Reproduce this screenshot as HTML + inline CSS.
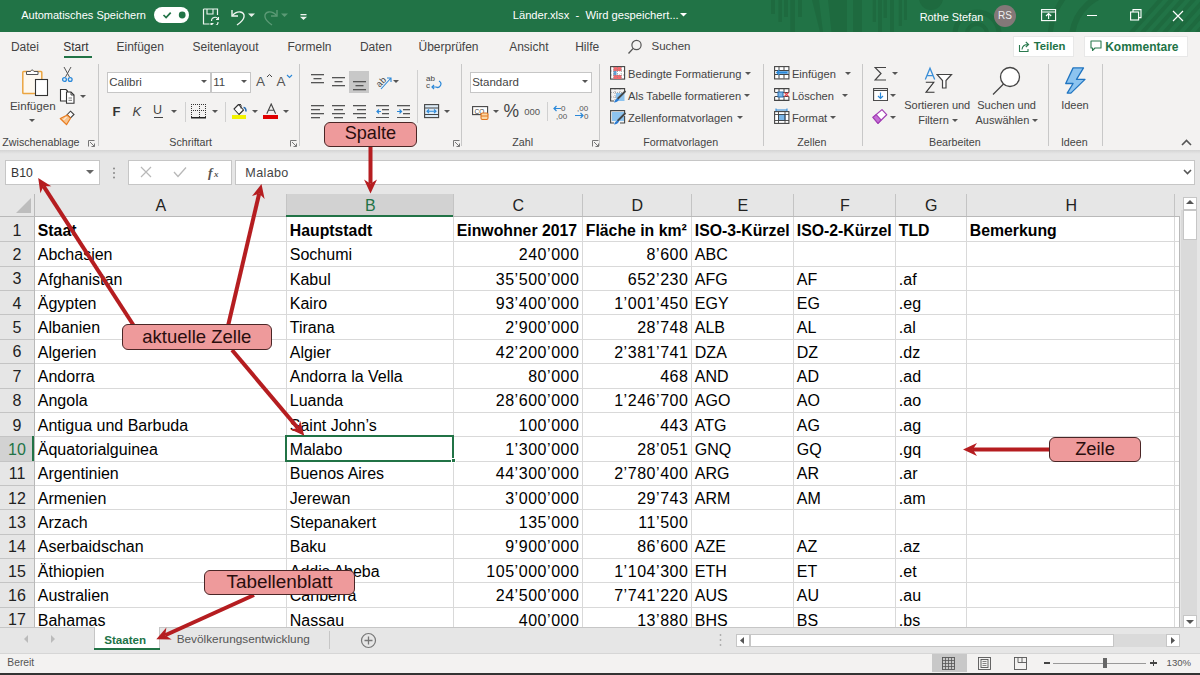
<!DOCTYPE html><html><head><meta charset='utf-8'><style>
*{margin:0;padding:0;box-sizing:border-box}
html,body{width:1200px;height:675px;overflow:hidden;background:#f3f2f1;font-family:"Liberation Sans", sans-serif;}
.a{position:absolute;white-space:nowrap}
.t{position:absolute;white-space:nowrap;line-height:1}
</style></head><body>
<div class='a' style='left:0;top:0;width:1200px;height:32px;background:#217346'></div>
<div class='a' style='left:0;top:150px;width:1200px;height:44px;background:#e6e6e6'></div>
<div class='a' style='left:0;top:194px;width:1180px;height:23px;background:#e6e6e6'></div>
<div class='a' style='left:34px;top:217px;width:1146px;height:410px;background:#fff'></div>
<div class='a' style='left:0;top:217px;width:34px;height:410px;background:#e6e6e6'></div>
<div class='a' style='left:286px;top:194px;width:167px;height:23px;background:#d2d2d2'></div>
<div class='a' style='left:0;top:436px;width:34px;height:25px;background:#d2d2d2'></div>
<div class='a' style='left:286px;top:217px;width:1px;height:410px;background:#d9d9d9'></div>
<div class='a' style='left:286px;top:194px;width:1px;height:23px;background:#c4c4c4'></div>
<div class='a' style='left:453px;top:217px;width:1px;height:410px;background:#d9d9d9'></div>
<div class='a' style='left:453px;top:194px;width:1px;height:23px;background:#c4c4c4'></div>
<div class='a' style='left:582px;top:217px;width:1px;height:410px;background:#d9d9d9'></div>
<div class='a' style='left:582px;top:194px;width:1px;height:23px;background:#c4c4c4'></div>
<div class='a' style='left:691px;top:217px;width:1px;height:410px;background:#d9d9d9'></div>
<div class='a' style='left:691px;top:194px;width:1px;height:23px;background:#c4c4c4'></div>
<div class='a' style='left:793px;top:217px;width:1px;height:410px;background:#d9d9d9'></div>
<div class='a' style='left:793px;top:194px;width:1px;height:23px;background:#c4c4c4'></div>
<div class='a' style='left:895px;top:217px;width:1px;height:410px;background:#d9d9d9'></div>
<div class='a' style='left:895px;top:194px;width:1px;height:23px;background:#c4c4c4'></div>
<div class='a' style='left:966px;top:217px;width:1px;height:410px;background:#d9d9d9'></div>
<div class='a' style='left:966px;top:194px;width:1px;height:23px;background:#c4c4c4'></div>
<div class='a' style='left:1174px;top:217px;width:1px;height:410px;background:#d9d9d9'></div>
<div class='a' style='left:1174px;top:194px;width:1px;height:23px;background:#c4c4c4'></div>
<div class='a' style='left:34px;top:241px;width:1146px;height:1px;background:#d9d9d9'></div>
<div class='a' style='left:0;top:241px;width:34px;height:1px;background:#c4c4c4'></div>
<div class='a' style='left:34px;top:266px;width:1146px;height:1px;background:#d9d9d9'></div>
<div class='a' style='left:0;top:266px;width:34px;height:1px;background:#c4c4c4'></div>
<div class='a' style='left:34px;top:290px;width:1146px;height:1px;background:#d9d9d9'></div>
<div class='a' style='left:0;top:290px;width:34px;height:1px;background:#c4c4c4'></div>
<div class='a' style='left:34px;top:314px;width:1146px;height:1px;background:#d9d9d9'></div>
<div class='a' style='left:0;top:314px;width:34px;height:1px;background:#c4c4c4'></div>
<div class='a' style='left:34px;top:339px;width:1146px;height:1px;background:#d9d9d9'></div>
<div class='a' style='left:0;top:339px;width:34px;height:1px;background:#c4c4c4'></div>
<div class='a' style='left:34px;top:363px;width:1146px;height:1px;background:#d9d9d9'></div>
<div class='a' style='left:0;top:363px;width:34px;height:1px;background:#c4c4c4'></div>
<div class='a' style='left:34px;top:388px;width:1146px;height:1px;background:#d9d9d9'></div>
<div class='a' style='left:0;top:388px;width:34px;height:1px;background:#c4c4c4'></div>
<div class='a' style='left:34px;top:412px;width:1146px;height:1px;background:#d9d9d9'></div>
<div class='a' style='left:0;top:412px;width:34px;height:1px;background:#c4c4c4'></div>
<div class='a' style='left:34px;top:436px;width:1146px;height:1px;background:#d9d9d9'></div>
<div class='a' style='left:0;top:436px;width:34px;height:1px;background:#c4c4c4'></div>
<div class='a' style='left:34px;top:461px;width:1146px;height:1px;background:#d9d9d9'></div>
<div class='a' style='left:0;top:461px;width:34px;height:1px;background:#c4c4c4'></div>
<div class='a' style='left:34px;top:485px;width:1146px;height:1px;background:#d9d9d9'></div>
<div class='a' style='left:0;top:485px;width:34px;height:1px;background:#c4c4c4'></div>
<div class='a' style='left:34px;top:509px;width:1146px;height:1px;background:#d9d9d9'></div>
<div class='a' style='left:0;top:509px;width:34px;height:1px;background:#c4c4c4'></div>
<div class='a' style='left:34px;top:534px;width:1146px;height:1px;background:#d9d9d9'></div>
<div class='a' style='left:0;top:534px;width:34px;height:1px;background:#c4c4c4'></div>
<div class='a' style='left:34px;top:558px;width:1146px;height:1px;background:#d9d9d9'></div>
<div class='a' style='left:0;top:558px;width:34px;height:1px;background:#c4c4c4'></div>
<div class='a' style='left:34px;top:582px;width:1146px;height:1px;background:#d9d9d9'></div>
<div class='a' style='left:0;top:582px;width:34px;height:1px;background:#c4c4c4'></div>
<div class='a' style='left:34px;top:607px;width:1146px;height:1px;background:#d9d9d9'></div>
<div class='a' style='left:0;top:607px;width:34px;height:1px;background:#c4c4c4'></div>
<div class='a' style='left:0;top:216px;width:1180px;height:1px;background:#b9b9b9'></div>
<div class='a' style='left:34px;top:194px;width:1px;height:433px;background:#b9b9b9'></div>
<div class='a' style='left:286px;top:215px;width:167px;height:2px;background:#217346'></div>
<div class='a' style='left:32px;top:436px;width:2px;height:25px;background:#217346'></div>
<svg class='a' style='left:0;top:194px' width='34' height='23'><polygon points='31,4 31,19 16,19' fill='#bdbdbd'/></svg>
<div class='t' style='left:34.8px;width:252px;top:198.3px;text-align:center;font-size:16px;color:#222'>A</div>
<div class='t' style='left:286.8px;width:167px;top:198.3px;text-align:center;font-size:16px;color:#217346'>B</div>
<div class='t' style='left:453.8px;width:129px;top:198.3px;text-align:center;font-size:16px;color:#222'>C</div>
<div class='t' style='left:582.8px;width:109px;top:198.3px;text-align:center;font-size:16px;color:#222'>D</div>
<div class='t' style='left:691.8px;width:102px;top:198.3px;text-align:center;font-size:16px;color:#222'>E</div>
<div class='t' style='left:793.8px;width:102px;top:198.3px;text-align:center;font-size:16px;color:#222'>F</div>
<div class='t' style='left:895.8px;width:71px;top:198.3px;text-align:center;font-size:16px;color:#222'>G</div>
<div class='t' style='left:966.8px;width:209px;top:198.3px;text-align:center;font-size:16px;color:#222'>H</div>
<div class='t' style='left:0;width:34px;top:222.6px;text-align:center;font-size:16px;color:#222'>1</div>
<div class='t' style='left:37.8px;top:223px;font-size:15.8px;font-weight:700;color:#000'>Staat</div>
<div class='t' style='left:289.8px;top:223px;font-size:15.8px;font-weight:700;color:#000'>Hauptstadt</div>
<div class='t' style='left:456.8px;top:223px;font-size:15.8px;font-weight:700;color:#000'>Einwohner 2017</div>
<div class='t' style='left:585.8px;top:223px;font-size:15.8px;font-weight:700;color:#000'>Fläche in km²</div>
<div class='t' style='left:694.8px;top:223px;font-size:15.8px;font-weight:700;color:#000'>ISO-3-Kürzel</div>
<div class='t' style='left:796.8px;top:223px;font-size:15.8px;font-weight:700;color:#000'>ISO-2-Kürzel</div>
<div class='t' style='left:898.8px;top:223px;font-size:15.8px;font-weight:700;color:#000'>TLD</div>
<div class='t' style='left:969.8px;top:223px;font-size:15.8px;font-weight:700;color:#000'>Bemerkung</div>
<div class='t' style='left:0;width:34px;top:247.0px;text-align:center;font-size:16px;color:#222'>2</div>
<div class='t' style='left:37.8px;top:247px;font-size:16px;font-weight:400;color:#000'>Abchasien</div>
<div class='t' style='left:289.8px;top:247px;font-size:16px;font-weight:400;color:#000'>Sochumi</div>
<div class='t' style='left:453px;width:126.5px;top:247px;text-align:right;font-size:16px;font-weight:400;color:#000;letter-spacing:0.55px'>240’000</div>
<div class='t' style='left:582px;width:106.5px;top:247px;text-align:right;font-size:16px;font-weight:400;color:#000;letter-spacing:0.55px'>8’600</div>
<div class='t' style='left:694.8px;top:247px;font-size:16px;font-weight:400;color:#000'>ABC</div>
<div class='t' style='left:0;width:34px;top:271.3px;text-align:center;font-size:16px;color:#222'>3</div>
<div class='t' style='left:37.8px;top:272px;font-size:16px;font-weight:400;color:#000'>Afghanistan</div>
<div class='t' style='left:289.8px;top:272px;font-size:16px;font-weight:400;color:#000'>Kabul</div>
<div class='t' style='left:453px;width:126.5px;top:272px;text-align:right;font-size:16px;font-weight:400;color:#000;letter-spacing:0.55px'>35’500’000</div>
<div class='t' style='left:582px;width:106.5px;top:272px;text-align:right;font-size:16px;font-weight:400;color:#000;letter-spacing:0.55px'>652’230</div>
<div class='t' style='left:694.8px;top:272px;font-size:16px;font-weight:400;color:#000'>AFG</div>
<div class='t' style='left:796.8px;top:272px;font-size:16px;font-weight:400;color:#000'>AF</div>
<div class='t' style='left:898.8px;top:272px;font-size:16px;font-weight:400;color:#000'>.af</div>
<div class='t' style='left:0;width:34px;top:295.7px;text-align:center;font-size:16px;color:#222'>4</div>
<div class='t' style='left:37.8px;top:296px;font-size:16px;font-weight:400;color:#000'>Ägypten</div>
<div class='t' style='left:289.8px;top:296px;font-size:16px;font-weight:400;color:#000'>Kairo</div>
<div class='t' style='left:453px;width:126.5px;top:296px;text-align:right;font-size:16px;font-weight:400;color:#000;letter-spacing:0.55px'>93’400’000</div>
<div class='t' style='left:582px;width:106.5px;top:296px;text-align:right;font-size:16px;font-weight:400;color:#000;letter-spacing:0.55px'>1’001’450</div>
<div class='t' style='left:694.8px;top:296px;font-size:16px;font-weight:400;color:#000'>EGY</div>
<div class='t' style='left:796.8px;top:296px;font-size:16px;font-weight:400;color:#000'>EG</div>
<div class='t' style='left:898.8px;top:296px;font-size:16px;font-weight:400;color:#000'>.eg</div>
<div class='t' style='left:0;width:34px;top:320.0px;text-align:center;font-size:16px;color:#222'>5</div>
<div class='t' style='left:37.8px;top:320px;font-size:16px;font-weight:400;color:#000'>Albanien</div>
<div class='t' style='left:289.8px;top:320px;font-size:16px;font-weight:400;color:#000'>Tirana</div>
<div class='t' style='left:453px;width:126.5px;top:320px;text-align:right;font-size:16px;font-weight:400;color:#000;letter-spacing:0.55px'>2’900’000</div>
<div class='t' style='left:582px;width:106.5px;top:320px;text-align:right;font-size:16px;font-weight:400;color:#000;letter-spacing:0.55px'>28’748</div>
<div class='t' style='left:694.8px;top:320px;font-size:16px;font-weight:400;color:#000'>ALB</div>
<div class='t' style='left:796.8px;top:320px;font-size:16px;font-weight:400;color:#000'>AL</div>
<div class='t' style='left:898.8px;top:320px;font-size:16px;font-weight:400;color:#000'>.al</div>
<div class='t' style='left:0;width:34px;top:344.4px;text-align:center;font-size:16px;color:#222'>6</div>
<div class='t' style='left:37.8px;top:345px;font-size:16px;font-weight:400;color:#000'>Algerien</div>
<div class='t' style='left:289.8px;top:345px;font-size:16px;font-weight:400;color:#000'>Algier</div>
<div class='t' style='left:453px;width:126.5px;top:345px;text-align:right;font-size:16px;font-weight:400;color:#000;letter-spacing:0.55px'>42’200’000</div>
<div class='t' style='left:582px;width:106.5px;top:345px;text-align:right;font-size:16px;font-weight:400;color:#000;letter-spacing:0.55px'>2’381’741</div>
<div class='t' style='left:694.8px;top:345px;font-size:16px;font-weight:400;color:#000'>DZA</div>
<div class='t' style='left:796.8px;top:345px;font-size:16px;font-weight:400;color:#000'>DZ</div>
<div class='t' style='left:898.8px;top:345px;font-size:16px;font-weight:400;color:#000'>.dz</div>
<div class='t' style='left:0;width:34px;top:368.8px;text-align:center;font-size:16px;color:#222'>7</div>
<div class='t' style='left:37.8px;top:369px;font-size:16px;font-weight:400;color:#000'>Andorra</div>
<div class='t' style='left:289.8px;top:369px;font-size:16px;font-weight:400;color:#000'>Andorra la Vella</div>
<div class='t' style='left:453px;width:126.5px;top:369px;text-align:right;font-size:16px;font-weight:400;color:#000;letter-spacing:0.55px'>80’000</div>
<div class='t' style='left:582px;width:106.5px;top:369px;text-align:right;font-size:16px;font-weight:400;color:#000;letter-spacing:0.55px'>468</div>
<div class='t' style='left:694.8px;top:369px;font-size:16px;font-weight:400;color:#000'>AND</div>
<div class='t' style='left:796.8px;top:369px;font-size:16px;font-weight:400;color:#000'>AD</div>
<div class='t' style='left:898.8px;top:369px;font-size:16px;font-weight:400;color:#000'>.ad</div>
<div class='t' style='left:0;width:34px;top:393.1px;text-align:center;font-size:16px;color:#222'>8</div>
<div class='t' style='left:37.8px;top:393px;font-size:16px;font-weight:400;color:#000'>Angola</div>
<div class='t' style='left:289.8px;top:393px;font-size:16px;font-weight:400;color:#000'>Luanda</div>
<div class='t' style='left:453px;width:126.5px;top:393px;text-align:right;font-size:16px;font-weight:400;color:#000;letter-spacing:0.55px'>28’600’000</div>
<div class='t' style='left:582px;width:106.5px;top:393px;text-align:right;font-size:16px;font-weight:400;color:#000;letter-spacing:0.55px'>1’246’700</div>
<div class='t' style='left:694.8px;top:393px;font-size:16px;font-weight:400;color:#000'>AGO</div>
<div class='t' style='left:796.8px;top:393px;font-size:16px;font-weight:400;color:#000'>AO</div>
<div class='t' style='left:898.8px;top:393px;font-size:16px;font-weight:400;color:#000'>.ao</div>
<div class='t' style='left:0;width:34px;top:417.5px;text-align:center;font-size:16px;color:#222'>9</div>
<div class='t' style='left:37.8px;top:418px;font-size:16px;font-weight:400;color:#000'>Antigua und Barbuda</div>
<div class='t' style='left:289.8px;top:418px;font-size:16px;font-weight:400;color:#000'>Saint John’s</div>
<div class='t' style='left:453px;width:126.5px;top:418px;text-align:right;font-size:16px;font-weight:400;color:#000;letter-spacing:0.55px'>100’000</div>
<div class='t' style='left:582px;width:106.5px;top:418px;text-align:right;font-size:16px;font-weight:400;color:#000;letter-spacing:0.55px'>443</div>
<div class='t' style='left:694.8px;top:418px;font-size:16px;font-weight:400;color:#000'>ATG</div>
<div class='t' style='left:796.8px;top:418px;font-size:16px;font-weight:400;color:#000'>AG</div>
<div class='t' style='left:898.8px;top:418px;font-size:16px;font-weight:400;color:#000'>.ag</div>
<div class='t' style='left:0;width:34px;top:441.8px;text-align:center;font-size:16px;color:#217346'>10</div>
<div class='t' style='left:37.8px;top:442px;font-size:16px;font-weight:400;color:#000'>Äquatorialguinea</div>
<div class='t' style='left:289.8px;top:442px;font-size:16px;font-weight:400;color:#000'>Malabo</div>
<div class='t' style='left:453px;width:126.5px;top:442px;text-align:right;font-size:16px;font-weight:400;color:#000;letter-spacing:0.55px'>1’300’000</div>
<div class='t' style='left:582px;width:106.5px;top:442px;text-align:right;font-size:16px;font-weight:400;color:#000;letter-spacing:0.55px'>28’051</div>
<div class='t' style='left:694.8px;top:442px;font-size:16px;font-weight:400;color:#000'>GNQ</div>
<div class='t' style='left:796.8px;top:442px;font-size:16px;font-weight:400;color:#000'>GQ</div>
<div class='t' style='left:898.8px;top:442px;font-size:16px;font-weight:400;color:#000'>.gq</div>
<div class='t' style='left:0;width:34px;top:466.2px;text-align:center;font-size:16px;color:#222'>11</div>
<div class='t' style='left:37.8px;top:466px;font-size:16px;font-weight:400;color:#000'>Argentinien</div>
<div class='t' style='left:289.8px;top:466px;font-size:16px;font-weight:400;color:#000'>Buenos Aires</div>
<div class='t' style='left:453px;width:126.5px;top:466px;text-align:right;font-size:16px;font-weight:400;color:#000;letter-spacing:0.55px'>44’300’000</div>
<div class='t' style='left:582px;width:106.5px;top:466px;text-align:right;font-size:16px;font-weight:400;color:#000;letter-spacing:0.55px'>2’780’400</div>
<div class='t' style='left:694.8px;top:466px;font-size:16px;font-weight:400;color:#000'>ARG</div>
<div class='t' style='left:796.8px;top:466px;font-size:16px;font-weight:400;color:#000'>AR</div>
<div class='t' style='left:898.8px;top:466px;font-size:16px;font-weight:400;color:#000'>.ar</div>
<div class='t' style='left:0;width:34px;top:490.6px;text-align:center;font-size:16px;color:#222'>12</div>
<div class='t' style='left:37.8px;top:491px;font-size:16px;font-weight:400;color:#000'>Armenien</div>
<div class='t' style='left:289.8px;top:491px;font-size:16px;font-weight:400;color:#000'>Jerewan</div>
<div class='t' style='left:453px;width:126.5px;top:491px;text-align:right;font-size:16px;font-weight:400;color:#000;letter-spacing:0.55px'>3’000’000</div>
<div class='t' style='left:582px;width:106.5px;top:491px;text-align:right;font-size:16px;font-weight:400;color:#000;letter-spacing:0.55px'>29’743</div>
<div class='t' style='left:694.8px;top:491px;font-size:16px;font-weight:400;color:#000'>ARM</div>
<div class='t' style='left:796.8px;top:491px;font-size:16px;font-weight:400;color:#000'>AM</div>
<div class='t' style='left:898.8px;top:491px;font-size:16px;font-weight:400;color:#000'>.am</div>
<div class='t' style='left:0;width:34px;top:514.9px;text-align:center;font-size:16px;color:#222'>13</div>
<div class='t' style='left:37.8px;top:515px;font-size:16px;font-weight:400;color:#000'>Arzach</div>
<div class='t' style='left:289.8px;top:515px;font-size:16px;font-weight:400;color:#000'>Stepanakert</div>
<div class='t' style='left:453px;width:126.5px;top:515px;text-align:right;font-size:16px;font-weight:400;color:#000;letter-spacing:0.55px'>135’000</div>
<div class='t' style='left:582px;width:106.5px;top:515px;text-align:right;font-size:16px;font-weight:400;color:#000;letter-spacing:0.55px'>11’500</div>
<div class='t' style='left:0;width:34px;top:539.3px;text-align:center;font-size:16px;color:#222'>14</div>
<div class='t' style='left:37.8px;top:539px;font-size:16px;font-weight:400;color:#000'>Aserbaidschan</div>
<div class='t' style='left:289.8px;top:539px;font-size:16px;font-weight:400;color:#000'>Baku</div>
<div class='t' style='left:453px;width:126.5px;top:539px;text-align:right;font-size:16px;font-weight:400;color:#000;letter-spacing:0.55px'>9’900’000</div>
<div class='t' style='left:582px;width:106.5px;top:539px;text-align:right;font-size:16px;font-weight:400;color:#000;letter-spacing:0.55px'>86’600</div>
<div class='t' style='left:694.8px;top:539px;font-size:16px;font-weight:400;color:#000'>AZE</div>
<div class='t' style='left:796.8px;top:539px;font-size:16px;font-weight:400;color:#000'>AZ</div>
<div class='t' style='left:898.8px;top:539px;font-size:16px;font-weight:400;color:#000'>.az</div>
<div class='t' style='left:0;width:34px;top:563.6px;text-align:center;font-size:16px;color:#222'>15</div>
<div class='t' style='left:37.8px;top:564px;font-size:16px;font-weight:400;color:#000'>Äthiopien</div>
<div class='t' style='left:289.8px;top:564px;font-size:16px;font-weight:400;color:#000'>Addis Abeba</div>
<div class='t' style='left:453px;width:126.5px;top:564px;text-align:right;font-size:16px;font-weight:400;color:#000;letter-spacing:0.55px'>105’000’000</div>
<div class='t' style='left:582px;width:106.5px;top:564px;text-align:right;font-size:16px;font-weight:400;color:#000;letter-spacing:0.55px'>1’104’300</div>
<div class='t' style='left:694.8px;top:564px;font-size:16px;font-weight:400;color:#000'>ETH</div>
<div class='t' style='left:796.8px;top:564px;font-size:16px;font-weight:400;color:#000'>ET</div>
<div class='t' style='left:898.8px;top:564px;font-size:16px;font-weight:400;color:#000'>.et</div>
<div class='t' style='left:0;width:34px;top:588.0px;text-align:center;font-size:16px;color:#222'>16</div>
<div class='t' style='left:37.8px;top:588px;font-size:16px;font-weight:400;color:#000'>Australien</div>
<div class='t' style='left:289.8px;top:588px;font-size:16px;font-weight:400;color:#000'>Canberra</div>
<div class='t' style='left:453px;width:126.5px;top:588px;text-align:right;font-size:16px;font-weight:400;color:#000;letter-spacing:0.55px'>24’500’000</div>
<div class='t' style='left:582px;width:106.5px;top:588px;text-align:right;font-size:16px;font-weight:400;color:#000;letter-spacing:0.55px'>7’741’220</div>
<div class='t' style='left:694.8px;top:588px;font-size:16px;font-weight:400;color:#000'>AUS</div>
<div class='t' style='left:796.8px;top:588px;font-size:16px;font-weight:400;color:#000'>AU</div>
<div class='t' style='left:898.8px;top:588px;font-size:16px;font-weight:400;color:#000'>.au</div>
<div class='t' style='left:0;width:34px;top:612.4px;text-align:center;font-size:16px;color:#222'>17</div>
<div class='t' style='left:37.8px;top:613px;font-size:16px;font-weight:400;color:#000'>Bahamas</div>
<div class='t' style='left:289.8px;top:613px;font-size:16px;font-weight:400;color:#000'>Nassau</div>
<div class='t' style='left:453px;width:126.5px;top:613px;text-align:right;font-size:16px;font-weight:400;color:#000;letter-spacing:0.55px'>400’000</div>
<div class='t' style='left:582px;width:106.5px;top:613px;text-align:right;font-size:16px;font-weight:400;color:#000;letter-spacing:0.55px'>13’880</div>
<div class='t' style='left:694.8px;top:613px;font-size:16px;font-weight:400;color:#000'>BHS</div>
<div class='t' style='left:796.8px;top:613px;font-size:16px;font-weight:400;color:#000'>BS</div>
<div class='t' style='left:898.8px;top:613px;font-size:16px;font-weight:400;color:#000'>.bs</div>
<div class='a' style='left:285px;top:435px;width:169px;height:27px;border:2px solid #217346'></div>
<div class='a' style='left:451px;top:458px;width:5px;height:5px;background:#217346;border:1px solid #fff'></div>
<svg class='a' style='left:700px;top:0px' width='500' height='32' viewBox='0 0 500 32'><rect x='71' y='0' width='4' height='14' fill='#1e6a3f'/><rect x='78.39999999999998' y='0' width='3.6000000000000227' height='22' fill='#1e6a3f'/><rect x='84' y='0' width='4' height='17' fill='#1e6a3f'/><rect x='90.29999999999995' y='0' width='4.7000000000000455' height='32' fill='#1e6a3f'/><rect x='98' y='0' width='4' height='17' fill='#1e6a3f'/><rect x='153' y='0' width='9' height='32' fill='#1e6a3f'/><rect x='172.70000000000005' y='0' width='3.2999999999999545' height='22' fill='#1e6a3f'/><rect x='178' y='0' width='4' height='32' fill='#1e6a3f'/><rect x='183.5' y='0' width='3.5' height='18' fill='#1e6a3f'/><rect x='190' y='0' width='4' height='32' fill='#1e6a3f'/><rect x='198.70000000000005' y='0' width='3.2999999999999545' height='26' fill='#1e6a3f'/><rect x='204' y='0' width='3' height='20' fill='#1e6a3f'/><polygon points='112,0 119,0 123,32 120,32' fill='#1e6a3f'/><polygon points='128,0 147,0 147,32 131.5,32' fill='#1e6a3f'/><circle cx='231' cy='-2' r='12' fill='#1e6a3f'/><circle cx='277' cy='34' r='22' fill='none' stroke='#1e6a3f' stroke-width='5'/><circle cx='277' cy='34' r='10' fill='none' stroke='#1e6a3f' stroke-width='4'/><path d='M372 36 A48 48 0 0 1 420 -8' fill='none' stroke='#1e6a3f' stroke-width='6'/><path d='M350 40 A70 70 0 0 1 412 -30' fill='none' stroke='#1e6a3f' stroke-width='5'/><line x1='430' y1='34' x2='462' y2='-2' stroke='#1e6a3f' stroke-width='4'/><line x1='441' y1='34' x2='473' y2='-2' stroke='#1e6a3f' stroke-width='4'/><line x1='452' y1='34' x2='484' y2='-2' stroke='#1e6a3f' stroke-width='4'/><line x1='463' y1='34' x2='495' y2='-2' stroke='#1e6a3f' stroke-width='4'/><line x1='474' y1='34' x2='506' y2='-2' stroke='#1e6a3f' stroke-width='4'/><line x1='485' y1='34' x2='517' y2='-2' stroke='#1e6a3f' stroke-width='4'/><line x1='496' y1='34' x2='528' y2='-2' stroke='#1e6a3f' stroke-width='4'/></svg><div class='t' style='left:21.2px;top:10.4px;font-size:11px;font-weight:400;color:#fff;'>Automatisches Speichern</div><div class='a' style='left:153.8px;top:6.8px;width:35.5px;height:16px;background:#fff;border-radius:8px'></div><svg class='a' style='left:153.8px;top:6.8px' width='36' height='16' viewBox='0 0 36 16'><path d='M9.5 8 l2.6 2.6 l4.6 -5' fill='none' stroke='#217346' stroke-width='1.7'/><circle cx='28.2' cy='8' r='3.4' fill='#217346'/></svg><svg class='a' style='left:202px;top:8px' width='18' height='17' viewBox='0 0 18 17'><path d='M1.5 1 h14 v6 M1.5 1 v15 h6' fill='none' stroke='#eef5f0' stroke-width='1.2'/><path d='M5 1 v5 h6 v-5' fill='none' stroke='#eef5f0' stroke-width='1.1'/><path d='M9.5 13 a3.5 3.5 0 0 1 6.5 -2 M16.5 9 v2.5 h-2.5' fill='none' stroke='#eef5f0' stroke-width='1.1'/><path d='M16 14 a3.5 3.5 0 0 1 -6.5 2 M9 18 v-2.5 h2.5' fill='none' stroke='#eef5f0' stroke-width='1.1'/></svg><svg class='a' style='left:229px;top:8px' width='18' height='18' viewBox='0 0 18 18'><path d='M3 2 v6 h6' fill='none' stroke='#f0f5f1' stroke-width='1.4'/><path d='M3.3 7.7 C 8 2, 16 3, 15 9 C 14.5 12, 11 15, 8 17' fill='none' stroke='#f0f5f1' stroke-width='1.4'/></svg><svg class='a' style='left:248px;top:13px' width='8' height='5' viewBox='0 0 8 5'><polygon points='0,0.5 7,0.5 3.5,4' fill='#e8f0ea'/></svg><svg class='a' style='left:262px;top:8px' width='18' height='18' viewBox='0 0 18 18'><path d='M15 2 v6 h-6' fill='none' stroke='#5c9a76' stroke-width='1.4'/><path d='M14.7 7.7 C 10 2, 2 3, 3 9 C 3.5 12, 7 15, 10 17' fill='none' stroke='#5c9a76' stroke-width='1.4'/></svg><svg class='a' style='left:281px;top:13px' width='8' height='5' viewBox='0 0 8 5'><polygon points='0,0.5 7,0.5 3.5,4' fill='#5c9a76'/></svg><svg class='a' style='left:300px;top:13px' width='8' height='8' viewBox='0 0 8 8'><rect x='0.5' y='1' width='6' height='1.3' fill='#eef5f0'/><polygon points='0,3.8 7,3.8 3.5,7' fill='#eef5f0'/></svg><div class='t' style='left:512.7px;top:10.2px;font-size:11.2px;font-weight:400;color:#fff;'>Länder.xlsx&nbsp; - &nbsp;Wird gespeichert...</div><svg class='a' style='left:680px;top:13px' width='8' height='5' viewBox='0 0 8 5'><polygon points='0,0 7,0 3.5,3.5' fill='#fff'/></svg><div class='t' style='left:919.7px;top:11.8px;font-size:10.9px;font-weight:400;color:#fff;'>Rothe Stefan</div><div class='a' style='left:994px;top:4.5px;width:22px;height:22px;background:#837878;border-radius:50%'></div><div class='t' style='left:994.0px;width:22px;text-align:center;top:11.0px;font-size:10px;font-weight:400;color:#eee'>RS</div><svg class='a' style='left:1041px;top:9px' width='16' height='13' viewBox='0 0 16 13'><rect x='0.6' y='0.6' width='14' height='11' fill='none' stroke='#fff' stroke-width='1.1'/><line x1='1' y1='3' x2='14' y2='3' stroke='#fff'/><path d='M7.6 10 v-5 M5 7 l2.6 -2.5 l2.6 2.5' fill='none' stroke='#fff' stroke-width='1.1'/></svg><div class='a' style='left:1087px;top:15px;width:10px;height:1.2px;background:#fff;'></div><svg class='a' style='left:1130px;top:9px' width='12' height='12' viewBox='0 0 12 12'><rect x='0.6' y='3' width='8' height='8' fill='none' stroke='#fff' stroke-width='1.1'/><path d='M3 3 v-2.4 h8 v8 h-2.4' fill='none' stroke='#fff' stroke-width='1.1'/></svg><svg class='a' style='left:1172px;top:10px' width='12' height='12' viewBox='0 0 12 12'><path d='M1 1 L11 11 M11 1 L1 11' stroke='#fff' stroke-width='1.2'/></svg><div class='t' style='left:10.9px;top:40.6px;font-size:12px;font-weight:400;color:#444;'>Datei</div><div class='t' style='left:63.2px;top:40.6px;font-size:12px;font-weight:400;color:#333;'>Start</div><div class='t' style='left:116.5px;top:40.6px;font-size:12px;font-weight:400;color:#444;'>Einfügen</div><div class='t' style='left:192.5px;top:40.6px;font-size:12px;font-weight:400;color:#444;'>Seitenlayout</div><div class='t' style='left:287.5px;top:40.6px;font-size:12px;font-weight:400;color:#444;'>Formeln</div><div class='t' style='left:359.9px;top:40.6px;font-size:12px;font-weight:400;color:#444;'>Daten</div><div class='t' style='left:418.5px;top:40.6px;font-size:12px;font-weight:400;color:#444;'>Überprüfen</div><div class='t' style='left:509.2px;top:40.6px;font-size:12px;font-weight:400;color:#444;'>Ansicht</div><div class='t' style='left:575.2px;top:40.6px;font-size:12px;font-weight:400;color:#444;'>Hilfe</div><div class='a' style='left:64px;top:55.5px;width:28px;height:2.5px;background:#217346;'></div><svg class='a' style='left:627px;top:39px' width='16' height='16' viewBox='0 0 16 16'><circle cx='9.5' cy='6' r='4.6' fill='none' stroke='#555' stroke-width='1.2'/><line x1='6.2' y1='9.4' x2='1.5' y2='14.5' stroke='#555' stroke-width='1.3'/></svg><div class='t' style='left:651.5px;top:41.1px;font-size:11.5px;font-weight:400;color:#444;'>Suchen</div><div class='a' style='left:1012.5px;top:35.5px;width:61.5px;height:21px;background:#fff;border:1px solid #e8e8e8'></div><svg class='a' style='left:1018px;top:40px' width='13' height='13' viewBox='0 0 13 13'><path d='M1.5 5 v6.5 h8.5 v-2.5' fill='none' stroke='#2a7a4f' stroke-width='1.1'/><path d='M4 9.5 q0.5 -5 6 -5 M7.8 2 l2.8 2.5 l-2.8 2.5' fill='none' stroke='#2a7a4f' stroke-width='1.1'/></svg><div class='t' style='left:1033.7px;top:41.4px;font-size:11.3px;font-weight:700;color:#217346;'>Teilen</div><div class='a' style='left:1084px;top:35.5px;width:104px;height:21px;background:#fff;border:1px solid #e8e8e8'></div><svg class='a' style='left:1090px;top:40px' width='12' height='12' viewBox='0 0 12 12'><path d='M1 1 h10 v7 h-6 l-2.5 2.5 v-2.5 h-1.5 z' fill='none' stroke='#2a7a4f' stroke-width='1.1' stroke-linejoin='round'/></svg><div class='t' style='left:1105.2px;top:40.8px;font-size:12px;font-weight:700;color:#217346;'>Kommentare</div><div class='a' style='left:98px;top:64px;width:1px;height:82px;background:#c8c8c8;'></div><div class='a' style='left:299px;top:64px;width:1px;height:82px;background:#c8c8c8;'></div><div class='a' style='left:461px;top:64px;width:1px;height:82px;background:#c8c8c8;'></div><div class='a' style='left:599px;top:64px;width:1px;height:82px;background:#c8c8c8;'></div><div class='a' style='left:763px;top:64px;width:1px;height:82px;background:#c8c8c8;'></div><div class='a' style='left:862px;top:64px;width:1px;height:82px;background:#c8c8c8;'></div><div class='a' style='left:1047.5px;top:64px;width:1px;height:82px;background:#c8c8c8;'></div><div class='a' style='left:1102px;top:64px;width:1px;height:82px;background:#c8c8c8;'></div><div class='t' style='left:2.3px;top:137.1px;font-size:10.7px;font-weight:400;color:#444;'>Zwischenablage</div><div class='t' style='left:169.3px;top:137.1px;font-size:10.7px;font-weight:400;color:#444;'>Schriftart</div><div class='t' style='left:512.3px;top:137.1px;font-size:10.7px;font-weight:400;color:#444;'>Zahl</div><div class='t' style='left:643.3px;top:137.1px;font-size:10.7px;font-weight:400;color:#444;'>Formatvorlagen</div><div class='t' style='left:797.3px;top:137.1px;font-size:10.7px;font-weight:400;color:#444;'>Zellen</div><div class='t' style='left:929.0px;top:137.1px;font-size:10.7px;font-weight:400;color:#444;'>Bearbeiten</div><div class='t' style='left:1060.9px;top:137.1px;font-size:10.7px;font-weight:400;color:#444;'>Ideen</div><svg class='a' style='left:88px;top:140px' width='7' height='7' viewBox='0 0 7 7'><path d='M0.5 0.5 h6 M0.5 0.5 v6' stroke='#777' stroke-width='1' fill='none'/><path d='M2 2 l4.5 4.5 M6.5 3.5 v3 h-3' stroke='#777' stroke-width='1' fill='none'/></svg><svg class='a' style='left:289.5px;top:140px' width='7' height='7' viewBox='0 0 7 7'><path d='M0.5 0.5 h6 M0.5 0.5 v6' stroke='#777' stroke-width='1' fill='none'/><path d='M2 2 l4.5 4.5 M6.5 3.5 v3 h-3' stroke='#777' stroke-width='1' fill='none'/></svg><svg class='a' style='left:453px;top:140px' width='7' height='7' viewBox='0 0 7 7'><path d='M0.5 0.5 h6 M0.5 0.5 v6' stroke='#777' stroke-width='1' fill='none'/><path d='M2 2 l4.5 4.5 M6.5 3.5 v3 h-3' stroke='#777' stroke-width='1' fill='none'/></svg><svg class='a' style='left:591.5px;top:140px' width='7' height='7' viewBox='0 0 7 7'><path d='M0.5 0.5 h6 M0.5 0.5 v6' stroke='#777' stroke-width='1' fill='none'/><path d='M2 2 l4.5 4.5 M6.5 3.5 v3 h-3' stroke='#777' stroke-width='1' fill='none'/></svg><svg class='a' style='left:1181px;top:139px' width='11' height='7' viewBox='0 0 11 7'><path d='M1 6 l4.5 -4.5 l4.5 4.5' fill='none' stroke='#555' stroke-width='1.6'/></svg><svg class='a' style='left:20px;top:66px' width='30' height='32' viewBox='0 0 30 32'><rect x='2.8' y='5.5' width='19' height='22' rx='0.8' fill='#fdf8ef' stroke='#eba540' stroke-width='1.5'/><path d='M6.5 8.5 v-3 h4 q1.5 -3.2 3.5 0 h4 v3 z' fill='#fff' stroke='#555' stroke-width='1'/><rect x='15.5' y='13.5' width='12' height='16' fill='#fff' stroke='#333' stroke-width='1.1'/></svg><div class='t' style='left:9.9px;top:99.7px;font-size:11.6px;font-weight:400;color:#444;'>Einfügen</div><svg class='a' style='left:29px;top:119px' width='6' height='4' viewBox='0 0 6 4'><polygon points='0,0 6,0 3,3' fill='#555'/></svg><svg class='a' style='left:61px;top:66px' width='13' height='17' viewBox='0 0 13 17'><path d='M3 1 L8.5 11 M10 1 L4.5 11' stroke='#555' stroke-width='1'/><circle cx='3.5' cy='13.5' r='1.9' fill='#e3f0fa' stroke='#2b88d8' stroke-width='1.3'/><circle cx='9.2' cy='13.5' r='1.9' fill='#e3f0fa' stroke='#2b88d8' stroke-width='1.3'/></svg><svg class='a' style='left:59px;top:88px' width='17' height='16' viewBox='0 0 17 16'><path d='M1.5 1.5 h5.5 l1.5 1.5 v10 h-7 z' fill='#fff' stroke='#333' stroke-width='1.1'/><path d='M7.5 4 h4.5 l3 3 v8.3 h-7.5 z' fill='#fff' stroke='#333' stroke-width='1.1'/><path d='M12 4 v3 h3' fill='none' stroke='#333' stroke-width='0.9'/><path d='M9.5 10 h3.5 M9.5 12.3 h3.5' stroke='#666' stroke-width='0.9'/></svg><svg class='a' style='left:80px;top:95px' width='6' height='4' viewBox='0 0 6 4'><polygon points='0,0 6,0 3,3' fill='#555'/></svg><svg class='a' style='left:59px;top:110px' width='17' height='16' viewBox='0 0 17 16'><path d='M11.5 1.2 l3.5 3.3 l-3.5 3.5 l-3.4 -3.3 z' fill='#fff' stroke='#444' stroke-width='1.1'/><path d='M8.3 5 l3.2 3.2 l-4 6.5 l-6.2 -6.2 z' fill='#f8c48e' stroke='#e87b1e' stroke-width='1.2' stroke-linejoin='round'/><path d='M4.5 10 l3 -3' stroke='#fff' stroke-width='1'/></svg><div class='a' style='left:107px;top:71.5px;width:104px;height:21px;background:#fff;border:1px solid #c6c6c6'></div><div class='t' style='left:109.2px;top:77.3px;font-size:11.5px;font-weight:400;color:#444;'>Calibri</div><svg class='a' style='left:200.5px;top:80px' width='6' height='4' viewBox='0 0 6 4'><polygon points='0,0 6,0 3,3' fill='#555'/></svg><div class='a' style='left:211px;top:71.5px;width:40px;height:21px;background:#fff;border:1px solid #c6c6c6'></div><div class='t' style='left:213.2px;top:77.3px;font-size:11.5px;font-weight:400;color:#444;'>11</div><svg class='a' style='left:241px;top:80px' width='6' height='4' viewBox='0 0 6 4'><polygon points='0,0 6,0 3,3' fill='#555'/></svg><div class='t' style='left:256.1px;top:74.6px;font-size:13.5px;font-weight:400;color:#555;'>A</div><svg class='a' style='left:266px;top:73px' width='7' height='5' viewBox='0 0 7 5'><path d='M1 4 l2.5 -2.5 l2.5 2.5' fill='none' stroke='#444' stroke-width='1'/></svg><div class='t' style='left:276.6px;top:74.6px;font-size:13.5px;font-weight:400;color:#555;'>A</div><svg class='a' style='left:286px;top:74px' width='7' height='5' viewBox='0 0 7 5'><path d='M1 1 l2.5 2.5 l2.5 -2.5' fill='none' stroke='#2b88d8' stroke-width='1.1'/></svg><div class='t' style='left:112.6px;top:104.5px;font-size:13px;font-weight:700;color:#333;'>F</div><div class='t' style='left:132.6px;top:104.5px;font-size:13px;font-weight:400;color:#444;font-style:italic'>K</div><div class='t' style='left:153.1px;top:103.9px;font-size:12.5px;font-weight:400;color:#444;'>U</div><div class='a' style='left:154px;top:116.5px;width:9px;height:1px;background:#444;'></div><svg class='a' style='left:170.6px;top:110px' width='6' height='4' viewBox='0 0 6 4'><polygon points='0,0 6,0 3,3' fill='#555'/></svg><div class='a' style='left:184.5px;top:102px;width:1px;height:20px;background:#d0d0d0;'></div><svg class='a' style='left:191px;top:104px' width='16' height='15' viewBox='0 0 16 15'><rect x='0' y='0' width='1' height='1' fill='#333'/><rect x='0' y='2' width='1' height='1' fill='#333'/><rect x='0' y='4' width='1' height='1' fill='#333'/><rect x='0' y='6' width='1' height='1' fill='#333'/><rect x='0' y='8' width='1' height='1' fill='#333'/><rect x='0' y='10' width='1' height='1' fill='#333'/><rect x='0' y='12' width='1' height='1' fill='#333'/><rect x='2' y='0' width='1' height='1' fill='#333'/><rect x='2' y='6' width='1' height='1' fill='#333'/><rect x='4' y='0' width='1' height='1' fill='#333'/><rect x='4' y='6' width='1' height='1' fill='#333'/><rect x='6' y='0' width='1' height='1' fill='#333'/><rect x='6' y='6' width='1' height='1' fill='#333'/><rect x='8' y='0' width='1' height='1' fill='#333'/><rect x='8' y='2' width='1' height='1' fill='#333'/><rect x='8' y='4' width='1' height='1' fill='#333'/><rect x='8' y='6' width='1' height='1' fill='#333'/><rect x='8' y='8' width='1' height='1' fill='#333'/><rect x='8' y='10' width='1' height='1' fill='#333'/><rect x='8' y='12' width='1' height='1' fill='#333'/><rect x='10' y='0' width='1' height='1' fill='#333'/><rect x='10' y='6' width='1' height='1' fill='#333'/><rect x='12' y='0' width='1' height='1' fill='#333'/><rect x='12' y='6' width='1' height='1' fill='#333'/><rect x='14' y='0' width='1' height='1' fill='#333'/><rect x='14' y='2' width='1' height='1' fill='#333'/><rect x='14' y='4' width='1' height='1' fill='#333'/><rect x='14' y='6' width='1' height='1' fill='#333'/><rect x='14' y='8' width='1' height='1' fill='#333'/><rect x='14' y='10' width='1' height='1' fill='#333'/><rect x='14' y='12' width='1' height='1' fill='#333'/><rect x='0' y='13' width='15' height='1.5' fill='#222'/></svg><svg class='a' style='left:211.6px;top:110px' width='6' height='4' viewBox='0 0 6 4'><polygon points='0,0 6,0 3,3' fill='#555'/></svg><div class='a' style='left:224.5px;top:102px;width:1px;height:20px;background:#d0d0d0;'></div><svg class='a' style='left:232px;top:103px' width='16' height='13' viewBox='0 0 16 13'><path d='M6.5 1.5 l5 5.5 l-4.5 4.5 l-5 -5.5 z' fill='#fff' stroke='#333' stroke-width='1.1' stroke-linejoin='round'/><path d='M7 2 q1 -1.8 2 0 v3.5' fill='none' stroke='#333' stroke-width='1'/><path d='M11.5 4.5 q2.5 0 2.5 4' fill='none' stroke='#2b6cb0' stroke-width='1.6'/></svg><div class='a' style='left:231.8px;top:115.4px;width:14.5px;height:3.5px;background:#f2f200;'></div><svg class='a' style='left:251.7px;top:110px' width='6' height='4' viewBox='0 0 6 4'><polygon points='0,0 6,0 3,3' fill='#555'/></svg><svg class='a' style='left:266px;top:103px' width='11' height='12' viewBox='0 0 11 12'><path d='M0.8 10.8 L5.2 1 L9.6 10.8 M2.5 7.3 h5.4' fill='none' stroke='#444' stroke-width='1.1'/></svg><div class='a' style='left:263px;top:115.4px;width:15.4px;height:3.5px;background:#e00000;'></div><svg class='a' style='left:283.3px;top:110px' width='6' height='4' viewBox='0 0 6 4'><polygon points='0,0 6,0 3,3' fill='#555'/></svg><svg class='a' style='left:311px;top:74px' width='14' height='14' viewBox='0 0 14 14'><rect x='0' y='0' width='13' height='1.3' fill='#555'/><rect x='2.5' y='4' width='8' height='1.3' fill='#555'/><rect x='0' y='8' width='13' height='1.3' fill='#555'/></svg><svg class='a' style='left:332px;top:77px' width='14' height='14' viewBox='0 0 14 14'><rect x='0' y='0' width='13' height='1.3' fill='#555'/><rect x='2.5' y='4' width='8' height='1.3' fill='#555'/><rect x='0' y='8' width='13' height='1.3' fill='#555'/></svg><div class='a' style='left:349px;top:71.3px;width:20px;height:21.4px;background:#c8c8c8;'></div><svg class='a' style='left:352.5px;top:80.5px' width='14' height='14' viewBox='0 0 14 14'><rect x='0' y='0' width='13' height='1.3' fill='#555'/><rect x='2.5' y='4' width='8' height='1.3' fill='#555'/><rect x='0' y='8' width='13' height='1.3' fill='#555'/></svg><svg class='a' style='left:375px;top:73px' width='18' height='18' viewBox='0 0 18 18'><text x='1' y='12' font-size='9' font-family='Liberation Sans' fill='#444' transform='rotate(-45 6 9)'>ab</text><path d='M6 16 L16 5 M12 5 h4 v4' fill='none' stroke='#2b88d8' stroke-width='1.1'/></svg><svg class='a' style='left:393px;top:80px' width='6' height='4' viewBox='0 0 6 4'><polygon points='0,0 6,0 3,3' fill='#555'/></svg><svg class='a' style='left:311px;top:105px' width='14' height='14' viewBox='0 0 14 14'><rect x='0' y='0' width='13' height='1.3' fill='#555'/><rect x='0' y='4' width='9' height='1.3' fill='#555'/><rect x='0' y='8' width='13' height='1.3' fill='#555'/><rect x='0' y='12' width='9' height='1.3' fill='#555'/></svg><svg class='a' style='left:332px;top:105px' width='14' height='14' viewBox='0 0 14 14'><rect x='0' y='0' width='13' height='1.3' fill='#555'/><rect x='2' y='4' width='9' height='1.3' fill='#555'/><rect x='0' y='8' width='13' height='1.3' fill='#555'/><rect x='2' y='12' width='9' height='1.3' fill='#555'/></svg><svg class='a' style='left:353px;top:105px' width='14' height='14' viewBox='0 0 14 14'><rect x='0' y='0' width='13' height='1.3' fill='#555'/><rect x='4' y='4' width='9' height='1.3' fill='#555'/><rect x='0' y='8' width='13' height='1.3' fill='#555'/><rect x='4' y='12' width='9' height='1.3' fill='#555'/></svg><svg class='a' style='left:376px;top:104px' width='14' height='14' viewBox='0 0 14 14'><rect x='0' y='1' width='13' height='1.3' fill='#555'/><rect x='6' y='5' width='7' height='1.3' fill='#555'/><rect x='6' y='9' width='7' height='1.3' fill='#555'/><rect x='0' y='13' width='13' height='1.3' fill='#555'/><path d='M1 7.5 h4 M3 5.5 l-2 2 l2 2' fill='none' stroke='#2b88d8' stroke-width='1.2'/></svg><svg class='a' style='left:396.5px;top:104px' width='14' height='14' viewBox='0 0 14 14'><rect x='0' y='1' width='13' height='1.3' fill='#555'/><rect x='6' y='5' width='7' height='1.3' fill='#555'/><rect x='6' y='9' width='7' height='1.3' fill='#555'/><rect x='0' y='13' width='13' height='1.3' fill='#555'/><path d='M0 7.5 h4 M2.5 5.5 l2 2 l-2 2' fill='none' stroke='#2b88d8' stroke-width='1.2'/></svg><div class='a' style='left:417px;top:70px;width:1px;height:53px;background:#d0d0d0;'></div><svg class='a' style='left:425px;top:74px' width='17' height='16' viewBox='0 0 17 16'><text x='1' y='7' font-size='8' font-family='Liberation Sans' fill='#444'>ab</text><text x='1' y='14' font-size='8' font-family='Liberation Sans' fill='#444'>c</text><path d='M14 7 a3 3 0 0 1 -3 6 h-4 M9 11 l-2 2 l2 2' fill='none' stroke='#2b88d8' stroke-width='1.2'/></svg><svg class='a' style='left:424px;top:104px' width='16' height='15' viewBox='0 0 16 15'><rect x='0.6' y='0.6' width='14' height='13' fill='#dcebf7' stroke='#444' stroke-width='1.1'/><path d='M1 4 h14 M1 10.5 h14' stroke='#444' stroke-width='1'/><path d='M3 7.3 h9 M5 5.5 l-2 1.8 l2 1.8 M10 5.5 l2 1.8 l-2 1.8' fill='none' stroke='#2b88d8' stroke-width='1.1'/></svg><svg class='a' style='left:444.4px;top:110px' width='6' height='4' viewBox='0 0 6 4'><polygon points='0,0 6,0 3,3' fill='#555'/></svg><div class='a' style='left:470px;top:71.5px;width:122px;height:21px;background:#fff;border:1px solid #c6c6c6'></div><div class='t' style='left:472.2px;top:77.3px;font-size:11.5px;font-weight:400;color:#444;'>Standard</div><svg class='a' style='left:582.4px;top:80px' width='6' height='4' viewBox='0 0 6 4'><polygon points='0,0 6,0 3,3' fill='#555'/></svg><svg class='a' style='left:472px;top:106px' width='18' height='14' viewBox='0 0 18 14'><rect x='0.6' y='0.6' width='15' height='8' fill='#fff' stroke='#444' stroke-width='1.1'/><text x='2.5' y='7.5' font-size='6.5' font-family='Liberation Sans' fill='#444'>CO</text><rect x='9' y='7' width='7' height='6.5' rx='1.5' fill='#fbd8a8' stroke='#e0771f' stroke-width='1.1'/><path d='M9 10 h7' stroke='#e0771f'/></svg><svg class='a' style='left:492.7px;top:110px' width='6' height='4' viewBox='0 0 6 4'><polygon points='0,0 6,0 3,3' fill='#555'/></svg><div class='t' style='left:503.4px;top:103.2px;font-size:17.5px;font-weight:400;color:#444;'>%</div><div class='t' style='left:524.3px;top:107.0px;font-size:9.5px;font-weight:400;color:#555;'>000</div><div class='a' style='left:547px;top:102px;width:1px;height:19px;background:#d0d0d0;'></div><svg class='a' style='left:553px;top:104px' width='17' height='16' viewBox='0 0 17 16'><text x='8' y='7' font-size='8' font-family='Liberation Sans' fill='#555'>0</text><text x='3' y='15' font-size='8' font-family='Liberation Sans' fill='#555'>,00</text><path d='M1 4.5 h7 M3.5 2 l-2.5 2.5 l2.5 2.5' fill='none' stroke='#2b88d8' stroke-width='1.2'/></svg><svg class='a' style='left:574px;top:104px' width='17' height='16' viewBox='0 0 17 16'><text x='3' y='7' font-size='8' font-family='Liberation Sans' fill='#555'>,00</text><text x='10' y='15' font-size='8' font-family='Liberation Sans' fill='#555'>0</text><path d='M1 11.5 h8 M6.5 9 l2.5 2.5 l-2.5 2.5' fill='none' stroke='#2b88d8' stroke-width='1.2'/></svg><svg class='a' style='left:610px;top:66px' width='16' height='14' viewBox='0 0 16 14'><rect x='0.6' y='0.6' width='14' height='12.5' fill='#fff' stroke='#444' stroke-width='1.1'/><rect x='3.5' y='1' width='8' height='4' fill='#f06a6f'/><rect x='3.5' y='9' width='8' height='4' fill='#f06a6f'/><rect x='3.5' y='5' width='3' height='4' fill='#5aa0dc'/><path d='M3.8 1 v12 M7.5 1 v12 M11.2 1 v12 M1 5 h14 M1 9 h14' stroke='#888' stroke-width='0.7' stroke-dasharray='1 1'/></svg><div class='t' style='left:628.0px;top:68.6px;font-size:11.15px;font-weight:400;color:#444;'>Bedingte Formatierung</div><svg class='a' style='left:745px;top:72px' width='6' height='4' viewBox='0 0 6 4'><polygon points='0,0 6,0 3,3' fill='#555'/></svg><svg class='a' style='left:610px;top:88px' width='17' height='15' viewBox='0 0 17 15'><path d='M4 13 h-3.4 v-12.4 h14 v3' fill='none' stroke='#444' stroke-width='1.1'/><path d='M5 1 v12 M10 1 v4 M1 4.5 h14 M1 9 h5' stroke='#888' stroke-width='0.7' stroke-dasharray='1 1'/><rect x='6' y='5' width='8.5' height='8' fill='#8dc3ee'/><path d='M15.5 3 l-8 8' stroke='#444' stroke-width='1.8'/><path d='M8 10.5 q-3 0.5 -4 4 q3.5 0 5 -3 z' fill='#2b7cd3'/></svg><div class='t' style='left:628.0px;top:90.6px;font-size:11.15px;font-weight:400;color:#444;'>Als Tabelle formatieren</div><svg class='a' style='left:743.5px;top:94px' width='6' height='4' viewBox='0 0 6 4'><polygon points='0,0 6,0 3,3' fill='#555'/></svg><svg class='a' style='left:610px;top:110px' width='17' height='15' viewBox='0 0 17 15'><path d='M4 13 h-3.4 v-12.4 h14 v3' fill='none' stroke='#444' stroke-width='1.1'/><rect x='2' y='2' width='12' height='9' fill='#8dc3ee'/><path d='M15.5 3 l-8 8' stroke='#444' stroke-width='1.8'/><path d='M8 10.5 q-3 0.5 -4 4 q3.5 0 5 -3 z' fill='#2b7cd3'/><path d='M10 13 h4.6 v-7' fill='none' stroke='#444' stroke-width='1.1'/></svg><div class='t' style='left:628.0px;top:112.6px;font-size:11.15px;font-weight:400;color:#444;'>Zellenformatvorlagen</div><svg class='a' style='left:737px;top:116px' width='6' height='4' viewBox='0 0 6 4'><polygon points='0,0 6,0 3,3' fill='#555'/></svg><svg class='a' style='left:774px;top:66px' width='16' height='14' viewBox='0 0 16 14'><rect x='0.6' y='0.6' width='14.3' height='12.3' fill='#fff' stroke='#444' stroke-width='1.1'/><rect x='5' y='4.5' width='9.5' height='4' fill='#7ab6e8'/><path d='M5 1 v3.5 M10 1 v3.5 M5 8.5 v4 M10 8.5 v4 M1 4.5 h14 M1 8.5 h14' stroke='#444' stroke-width='1'/><path d='M13 6.5 H2.8 M5.2 4.2 L2.8 6.5 L5.2 8.8' fill='none' stroke='#2b88d8' stroke-width='1.3'/></svg><div class='t' style='left:791.9px;top:68.6px;font-size:11.15px;font-weight:400;color:#444;'>Einfügen</div><svg class='a' style='left:845px;top:72px' width='6' height='4' viewBox='0 0 6 4'><polygon points='0,0 6,0 3,3' fill='#555'/></svg><svg class='a' style='left:774px;top:88px' width='16' height='14' viewBox='0 0 16 14'><path d='M0.6 4.5 v-3.9 h14.3 v3.9 M0.6 8.5 v3.9 h14.3 v-3.9' fill='#fff' stroke='#444' stroke-width='1.1'/><path d='M5 1 v3.5 M10 1 v3.5 M5 8.5 v4 M10 8.5 v4 M1 4.5 h3 M1 8.5 h3 M9 4.5 h6 M9 8.5 h6' stroke='#444' stroke-width='1'/><rect x='4' y='4' width='5' height='5' fill='#7ab6e8' stroke='#2b6cb0' stroke-width='1'/><path d='M10.5 4.5 l4 4 M14.5 4.5 l-4 4' stroke='#e8484f' stroke-width='1.1'/></svg><div class='t' style='left:791.9px;top:90.6px;font-size:11.15px;font-weight:400;color:#444;'>Löschen</div><svg class='a' style='left:842px;top:94px' width='6' height='4' viewBox='0 0 6 4'><polygon points='0,0 6,0 3,3' fill='#555'/></svg><svg class='a' style='left:774px;top:108px' width='16' height='16' viewBox='0 0 16 16'><path d='M2 2 h11 M2 0.5 v3 M13 0.5 v3' stroke='#2b88d8' stroke-width='1'/><rect x='0.6' y='3.6' width='14.3' height='11.8' fill='#fff' stroke='#444' stroke-width='1.1'/><rect x='4.5' y='6.5' width='6.5' height='6' fill='#7ab6e8' stroke='#2b6cb0' stroke-width='1'/><path d='M4.5 4 v11 M11 4 v11 M1 6.5 h14 M1 12.5 h14' stroke='#444' stroke-width='0.9'/></svg><div class='t' style='left:791.9px;top:112.6px;font-size:11.15px;font-weight:400;color:#444;'>Format</div><svg class='a' style='left:830px;top:116px' width='6' height='4' viewBox='0 0 6 4'><polygon points='0,0 6,0 3,3' fill='#555'/></svg><svg class='a' style='left:874px;top:66px' width='13' height='15' viewBox='0 0 13 15'><path d='M12 1.5 h-11 l6 6 l-6 6.5 h11' fill='none' stroke='#444' stroke-width='1.2'/></svg><svg class='a' style='left:892px;top:72px' width='6' height='4' viewBox='0 0 6 4'><polygon points='0,0 6,0 3,3' fill='#555'/></svg><svg class='a' style='left:873px;top:88px' width='15' height='13' viewBox='0 0 15 13'><rect x='0.6' y='0.6' width='14' height='12' fill='#fff' stroke='#444' stroke-width='1.1'/><path d='M1 2.5 h13' stroke='#444'/><path d='M7.5 4.5 v6 M5 8 l2.5 2.5 l2.5 -2.5' fill='none' stroke='#2b88d8' stroke-width='1.2'/></svg><svg class='a' style='left:890px;top:94px' width='6' height='4' viewBox='0 0 6 4'><polygon points='0,0 6,0 3,3' fill='#555'/></svg><svg class='a' style='left:872px;top:109px' width='16' height='16' viewBox='0 0 16 16'><path d='M1 8.3 L10 0.6 L14.7 5.7 L6 14.3 Z' fill='#fff' stroke='#a23fb5' stroke-width='1.2' stroke-linejoin='round'/><path d='M1 8.3 L4.2 5.6 L9 10.8 L6 14.3 Z' fill='#c46fd6' stroke='#a23fb5' stroke-width='1.1' stroke-linejoin='round'/></svg><svg class='a' style='left:890px;top:116px' width='6' height='4' viewBox='0 0 6 4'><polygon points='0,0 6,0 3,3' fill='#555'/></svg><svg class='a' style='left:920px;top:66px' width='18' height='28' viewBox='0 0 18 28'><path d='M5.3 13.6 L10 2.3 L14.7 13.6 M7 9.6 h6' fill='none' stroke='#3a8fd8' stroke-width='1.3'/><path d='M5.8 16.3 h8 L6 26.3 h8.5' fill='none' stroke='#333' stroke-width='1.1'/></svg><svg class='a' style='left:936px;top:73px' width='17' height='17' viewBox='0 0 17 17'><path d='M1 1.5 h14.5 l-5.5 6 v7.5 h-3.5 v-7.5 z' fill='#fff' stroke='#444' stroke-width='1.2'/></svg><div class='t' style='left:904.2px;top:100.4px;font-size:11px;font-weight:400;color:#444;'>Sortieren und</div><div class='t' style='left:918.2px;top:115.4px;font-size:11px;font-weight:400;color:#444;'>Filtern</div><svg class='a' style='left:952px;top:119px' width='6' height='4' viewBox='0 0 6 4'><polygon points='0,0 6,0 3,3' fill='#555'/></svg><svg class='a' style='left:992px;top:66px' width='30' height='30' viewBox='0 0 30 30'><circle cx='18' cy='11' r='9.5' fill='#fff' stroke='#444' stroke-width='1.3'/><path d='M11.5 18 l-10.5 10.5' stroke='#444' stroke-width='1.3'/></svg><div class='t' style='left:977.2px;top:100.4px;font-size:11px;font-weight:400;color:#444;'>Suchen und</div><div class='t' style='left:975.5px;top:115.4px;font-size:11px;font-weight:400;color:#444;'>Auswählen</div><svg class='a' style='left:1032px;top:119px' width='6' height='4' viewBox='0 0 6 4'><polygon points='0,0 6,0 3,3' fill='#555'/></svg><svg class='a' style='left:1064px;top:66px' width='23' height='29' viewBox='0 0 23 29'><path d='M9.1 1.9 H19.5 L12.5 13.4 H21 L6.9 27.1 H3.2 L9.1 17.5 H1.7 Z' fill='#8cc4f0' stroke='#1f74c0' stroke-width='1.3' stroke-linejoin='round'/></svg><div class='t' style='left:1061.2px;top:100.2px;font-size:11px;font-weight:400;color:#444;'>Ideen</div>
<div class='a' style='left:0px;top:150px;width:1200px;height:4px;background:linear-gradient(#d4d4d4,#e6e6e6);'></div><div class='a' style='left:5px;top:160px;width:95px;height:25px;background:#fff;border:1px solid #c6c6c6'></div><div class='t' style='left:11.1px;top:166.9px;font-size:12.2px;font-weight:400;color:#333;'>B10</div><svg class='a' style='left:86px;top:170px' width='9' height='6' viewBox='0 0 9 6'><polygon points='0,0 8,0 4,4' fill='#666'/></svg><svg class='a' style='left:112px;top:166px' width='4' height='14' viewBox='0 0 4 14'><circle cx='2' cy='2.5' r='1' fill='#888'/><circle cx='2' cy='7' r='1' fill='#888'/><circle cx='2' cy='11.5' r='1' fill='#888'/></svg><div class='a' style='left:128px;top:160px;width:104px;height:25px;background:#fff;border:1px solid #c6c6c6'></div><svg class='a' style='left:140px;top:166px' width='12' height='12' viewBox='0 0 12 12'><path d='M1 1 L11 11 M11 1 L1 11' stroke='#b8b8b8' stroke-width='1.2'/></svg><svg class='a' style='left:173px;top:166px' width='14' height='12' viewBox='0 0 14 12'><path d='M1 6 l4 4.5 l8 -9' fill='none' stroke='#b8b8b8' stroke-width='1.3'/></svg><div class='t' style='left:208.1px;top:166.1px;font-size:13.5px;font-weight:700;color:#555;font-style:italic;font-family:"Liberation Serif"'>f</div><div class='t' style='left:213.9px;top:170.4px;font-size:9px;font-weight:700;color:#555;font-style:italic;font-family:"Liberation Serif"'>x</div><div class='a' style='left:235px;top:160px;width:960px;height:25px;background:#fff;border:1px solid #c6c6c6'></div><div class='t' style='left:245.3px;top:166.5px;font-size:12.6px;font-weight:400;color:#444;letter-spacing:0.35px'>Malabo</div><svg class='a' style='left:1183px;top:168.5px' width='9' height='6' viewBox='0 0 9 6'><path d='M1 1 l3.5 3.5 l3.5 -3.5' fill='none' stroke='#555' stroke-width='1.6'/></svg>
<div class='a' style='left:1180px;top:194px;width:20px;height:433px;background:#e6e6e6;'></div><div class='a' style='left:1181px;top:210px;width:16px;height:418px;background:#dadada;'></div><div class='a' style='left:1183px;top:196.5px;width:14px;height:13px;background:#fff;border:1px solid #c6c6c6'></div><svg class='a' style='left:1186px;top:200px' width='8' height='5' viewBox='0 0 8 5'><polygon points='0,4 8,4 4,0' fill='#555'/></svg><div class='a' style='left:1183px;top:210px;width:14px;height:29.5px;background:#fff;border:1px solid #c6c6c6'></div><div class='a' style='left:1183px;top:615px;width:14px;height:13px;background:#fff;border:1px solid #c6c6c6'></div><svg class='a' style='left:1186px;top:620px' width='8' height='5' viewBox='0 0 8 5'><polygon points='0,0 8,0 4,4' fill='#555'/></svg><div class='a' style='left:1179px;top:217px;width:1px;height:410px;background:#b9b9b9;'></div><div class='a' style='left:0px;top:627px;width:1200px;height:26px;background:#e6e6e6;'></div><div class='a' style='left:0px;top:627px;width:1200px;height:1px;background:#c6c6c6;'></div><svg class='a' style='left:24px;top:634px' width='6' height='10' viewBox='0 0 6 10'><polygon points='4,1 4,9 0,5' fill='#bbb'/></svg><svg class='a' style='left:50px;top:634px' width='6' height='10' viewBox='0 0 6 10'><polygon points='1,1 1,9 5,5' fill='#bbb'/></svg><div class='a' style='left:94px;top:627px;width:66px;height:23px;background:#fff;border-left:1px solid #c6c6c6;border-right:1px solid #c6c6c6'></div><div class='a' style='left:94px;top:648px;width:66px;height:2px;background:#217346;'></div><div class='t' style='left:104.2px;top:633.9px;font-size:11.6px;font-weight:700;color:#217346;'>Staaten</div><div class='t' style='left:176.7px;top:633.7px;font-size:11.8px;font-weight:400;color:#555;'>Bevölkerungsentwicklung</div><div class='a' style='left:329px;top:631px;width:1px;height:18px;background:#c6c6c6;'></div><svg class='a' style='left:360px;top:632px' width='17' height='17' viewBox='0 0 17 17'><circle cx='8.5' cy='8.5' r='7' fill='none' stroke='#777' stroke-width='1.2'/><path d='M8.5 4.5 v8 M4.5 8.5 h8' stroke='#777' stroke-width='1.3'/></svg><svg class='a' style='left:718px;top:633px' width='5' height='14' viewBox='0 0 5 14'><circle cx='2.5' cy='2' r='0.9' fill='#aaa'/><circle cx='2.5' cy='7' r='0.9' fill='#aaa'/><circle cx='2.5' cy='12' r='0.9' fill='#aaa'/></svg><div class='a' style='left:736px;top:634px;width:444px;height:13px;background:#dadada;'></div><div class='a' style='left:736px;top:634px;width:14px;height:13px;background:#fff;border:1px solid #c6c6c6'></div><svg class='a' style='left:740px;top:637px' width='5' height='8' viewBox='0 0 5 8'><polygon points='4,0 4,7 0,3.5' fill='#555'/></svg><div class='a' style='left:750px;top:634px;width:364px;height:13px;background:#fff;border:1px solid #c6c6c6'></div><div class='a' style='left:1166px;top:634px;width:14px;height:13px;background:#fff;border:1px solid #c6c6c6'></div><svg class='a' style='left:1171px;top:637px' width='5' height='8' viewBox='0 0 5 8'><polygon points='0,0 0,7 4,3.5' fill='#555'/></svg><div class='a' style='left:0px;top:653px;width:1200px;height:20px;background:#f3f2f1;'></div><div class='a' style='left:0px;top:653px;width:1200px;height:1px;background:#d6d6d6;'></div><div class='t' style='left:7.3px;top:657.6px;font-size:10.3px;font-weight:400;color:#555;'>Bereit</div><div class='a' style='left:932px;top:654px;width:35px;height:18px;background:#c8c8c8;'></div><svg class='a' style='left:942px;top:657px' width='14' height='13' viewBox='0 0 14 13'><rect x='0.5' y='0.5' width='12' height='12' fill='none' stroke='#555' stroke-width='0.9'/><path d='M3.5 0.5 v12 M6.5 0.5 v12 M9.5 0.5 v12 M0.5 3.5 h12 M0.5 6.5 h12 M0.5 9.5 h12' stroke='#555' stroke-width='0.8'/></svg><svg class='a' style='left:978px;top:657px' width='14' height='13' viewBox='0 0 14 13'><rect x='0.5' y='0.5' width='12' height='12' fill='none' stroke='#555' stroke-width='0.9'/><rect x='3' y='2.5' width='7' height='8' fill='none' stroke='#555' stroke-width='0.9'/><path d='M4.5 4.5 h4 M4.5 6.5 h4 M4.5 8.5 h4' stroke='#555' stroke-width='0.7'/></svg><svg class='a' style='left:1014px;top:657px' width='14' height='13' viewBox='0 0 14 13'><rect x='0.5' y='0.5' width='12' height='12' fill='none' stroke='#555' stroke-width='0.9'/><path d='M4 0.5 v5 h4 v-5 M8 5.5 h4.5' fill='none' stroke='#555' stroke-width='0.9'/></svg><div class='a' style='left:1043.5px;top:662px;width:6px;height:1.6px;background:#444;'></div><div class='a' style='left:1053px;top:662.5px;width:93px;height:1px;background:#999;'></div><div class='a' style='left:1102.5px;top:658px;width:4.5px;height:10px;background:#666;'></div><div class='a' style='left:1150px;top:662px;width:6.5px;height:1.6px;background:#444;'></div><div class='a' style='left:1152.5px;top:659.5px;width:1.6px;height:6.5px;background:#444;'></div><div class='t' style='left:1166.6px;top:658.2px;font-size:9.6px;font-weight:400;color:#555;'>130%</div><div class='a' style='left:0px;top:672.5px;width:1200px;height:2.5px;background:#333333;'></div>
<svg class='a' style='left:0;top:0' width='1200' height='675'><line x1='370.5' y1='147' x2='370.5' y2='183.7' stroke='#b51d20' stroke-width='4'/><polygon points='370.5,193.5 364.0,179.5 370.5,183.7 377.0,179.5' fill='#b51d20'/><line x1='134' y1='326' x2='43.5' y2='186.2' stroke='#b51d20' stroke-width='4'/><polygon points='38.2,178.0 51.3,186.2 43.5,186.2 40.4,193.3' fill='#b51d20'/><line x1='228' y1='326' x2='259.2' y2='193.5' stroke='#b51d20' stroke-width='4'/><polygon points='261.5,184.0 264.6,199.1 259.2,193.5 252.0,196.1' fill='#b51d20'/><line x1='232' y1='350' x2='298.0' y2='428.2' stroke='#b51d20' stroke-width='4'/><polygon points='304.3,435.7 290.3,429.2 298.0,428.2 300.2,420.8' fill='#b51d20'/><line x1='1049' y1='449.5' x2='972.8' y2='449.5' stroke='#b51d20' stroke-width='4'/><polygon points='963.0,449.5 977.0,443.0 972.8,449.5 977.0,456.0' fill='#b51d20'/><line x1='254' y1='595' x2='165.2' y2='635.3' stroke='#b51d20' stroke-width='4'/><polygon points='156.3,639.3 166.4,627.6 165.2,635.3 171.7,639.4' fill='#b51d20'/></svg><div class='a' style='left:324px;top:121.5px;width:92.69999999999999px;height:25.599999999999994px;background:#ee9a9b;border:1.6px solid #4a2626;border-radius:6px'></div><div class='t' style='left:220.4px;width:300px;text-align:center;top:124.3px;font-size:18.1px;font-weight:400;color:#2a0e0e'>Spalte</div><div class='a' style='left:121.7px;top:324.2px;width:150.3px;height:26.0px;background:#ee9a9b;border:1.6px solid #4a2626;border-radius:6px'></div><div class='t' style='left:46.8px;width:300px;text-align:center;top:328.1px;font-size:18.5px;font-weight:400;color:#2a0e0e'>aktuelle Zelle</div><div class='a' style='left:1049px;top:437px;width:92px;height:25.30000000000001px;background:#ee9a9b;border:1.6px solid #4a2626;border-radius:6px'></div><div class='t' style='left:945.0px;width:300px;text-align:center;top:440.2px;font-size:18.3px;font-weight:400;color:#2a0e0e'>Zeile</div><div class='a' style='left:204.3px;top:569.8px;width:150.39999999999998px;height:25.0px;background:#ee9a9b;border:1.6px solid #4a2626;border-radius:6px'></div><div class='t' style='left:129.5px;width:300px;text-align:center;top:572.8px;font-size:18.9px;font-weight:400;color:#2a0e0e'>Tabellenblatt</div>
</body></html>
